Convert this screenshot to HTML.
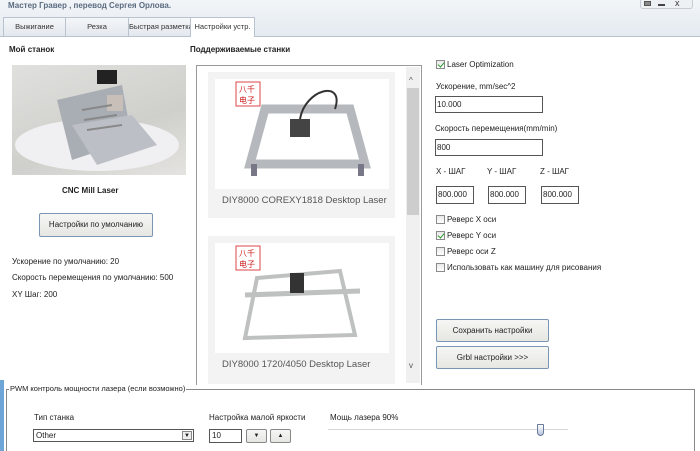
<!DOCTYPE html>
<html><head><meta charset="utf-8"><style>
*{box-sizing:border-box;margin:0;padding:0}
html,body{width:700px;height:451px;overflow:hidden}
body{background:#fff;font-family:"Liberation Sans","DejaVu Sans",sans-serif;font-size:8px;color:#222;position:relative}
.a{position:absolute;white-space:nowrap}
.b{font-weight:bold}
.tab{position:absolute;top:17px;height:19px;border:1px solid #b9c3cf;border-bottom:none;background:linear-gradient(#f4f6f8,#e3e8ee);text-align:center;line-height:17px;font-size:7.5px;color:#333;white-space:nowrap;overflow:hidden}
.inp{position:absolute;border:1px solid #555;background:#fff;font-size:8px;padding:2px 1px;line-height:11px}
.btn{position:absolute;border:1px solid #7b95b5;border-radius:2px;background:linear-gradient(#f6f6f4,#e6e6e2);text-align:center;font-size:8px}
.cb{position:absolute;width:9px;height:9px;border:1px solid #8a8a8a;background:linear-gradient(#e9e9e9,#fff)}
.ck:after{content:"";position:absolute;left:2px;top:0px;width:3px;height:5px;border:solid #2a9a2a;border-width:0 1.5px 1.5px 0;transform:rotate(40deg)}
</style></head><body>
<div class="a" style="left:0;top:0;width:700px;height:37px;background:linear-gradient(#f2f5f8,#e4eaf0)"></div>
<div class="a b" style="left:8px;top:1px;color:#5b6b80;font-size:8px">Мастер Гравер , перевод Сергея Орлова.</div>
<div class="a" style="left:640px;top:0;width:53px;height:9px;border:1px solid #c5ccd4;border-top:none;border-radius:0 0 3px 3px;background:#eef1f4"></div>
<div class="a" style="left:644px;top:1px;width:7px;height:5px;border:1px solid #555;background:#888"></div>
<div class="a" style="left:658px;top:4px;width:7px;height:2px;background:#444"></div>
<div class="a" style="left:675px;top:-2px;font-size:9px;color:#333">x</div>
<div class="a" style="left:0;top:36px;width:700px;height:1px;background:#b9c3cf"></div>
<div class="tab" style="left:3px;width:63px">Выжигание</div>
<div class="tab" style="left:65px;width:64px">Резка</div>
<div class="tab" style="left:128px;width:63px;text-align:right;padding-right:2px">Быстрая разметка</div>
<div class="tab" style="left:190px;width:65px;background:#fff;height:20px">Настройки устр.</div>

<div class="a b" style="left:9px;top:45px">Мой станок</div>
<div class="a b" style="left:190px;top:45px">Поддерживаемые станки</div>
<div class="a" style="left:12px;top:65px;width:174px;height:110px;background:linear-gradient(160deg,#e0e0de,#cfcfcb 60%,#e4e3e0)">
<svg width="174" height="110"><ellipse cx="85" cy="80" rx="82" ry="26" fill="#f0f0f2"/><polygon points="45,35 110,20 120,75 60,95" fill="#a9adb4"/><rect x="85" y="5" width="20" height="14" fill="#222"/><polygon points="60,60 120,50 145,80 85,100" fill="#bcc0c6"/><rect x="95" y="30" width="16" height="16" fill="#c8c0b8"/><path d="M70 45 L100 40 M72 55 L105 50 M75 65 L110 60" stroke="#888" stroke-width="2"/></svg></div>
<div class="a b" style="left:62px;top:186px">CNC Mill Laser</div>
<div class="btn" style="left:39px;top:213px;width:114px;height:24px;line-height:22px">Настройки по умолчанию</div>
<div class="a" style="left:12px;top:257px">Ускорение по умолчанию: 20</div>
<div class="a" style="left:12px;top:273px">Скорость перемещения по умолчанию: 500</div>
<div class="a" style="left:12px;top:290px">XY Шаг: 200</div>

<div class="a" style="left:196px;top:65px;width:226px;height:320px;border:1px solid #999;border-bottom:none"></div>
<div class="a" style="left:406px;top:67px;width:14px;height:316px;background:#f0f0f0"></div>
<div class="a" style="left:407px;top:88px;width:12px;height:127px;background:#cdcdcd"></div>
<div class="a" style="left:409px;top:76px;font-size:8px;color:#555">^</div>
<div class="a" style="left:409px;top:361px;font-size:8px;color:#555">v</div>
<div class="a" style="left:208px;top:72px;width:187px;height:146px;background:#f3f3f3"></div>
<div class="a" style="left:215px;top:79px;width:174px;height:110px;background:#fff">
<svg width="174" height="110"><rect x="21" y="3" width="24" height="24" fill="#fff" stroke="#d44" stroke-width="1"/><text x="24" y="13" font-size="8" fill="#c22" font-family="Noto Sans CJK SC">八千</text><text x="24" y="24" font-size="8" fill="#c22" font-family="Noto Sans CJK SC">电子</text><polygon points="50,30 135,30 150,85 35,85" fill="none" stroke="#b5b8bc" stroke-width="9"/><rect x="75" y="40" width="20" height="18" fill="#444"/><path d="M85 40 C 90 10, 130 0, 120 30" stroke="#333" stroke-width="2" fill="none"/><rect x="36" y="85" width="6" height="12" fill="#778"/><rect x="143" y="85" width="6" height="12" fill="#778"/></svg></div>
<div class="a" style="left:222px;top:195px;font-size:9.5px;color:#555">DIY8000 COREXY1818 Desktop Laser</div>
<div class="a" style="left:208px;top:236px;width:187px;height:148px;background:#f3f3f3"></div>
<div class="a" style="left:215px;top:243px;width:174px;height:110px;background:#fff">
<svg width="174" height="110"><rect x="21" y="3" width="24" height="24" fill="#fff" stroke="#d44"/><text x="24" y="13" font-size="8" fill="#c22" font-family="Noto Sans CJK SC">八千</text><text x="24" y="24" font-size="8" fill="#c22" font-family="Noto Sans CJK SC">电子</text><polygon points="42,35 125,28 140,92 30,95" fill="none" stroke="#bfc1c0" stroke-width="4"/><line x1="30" y1="52" x2="145" y2="48" stroke="#bfc1c0" stroke-width="5"/><rect x="75" y="30" width="14" height="20" fill="#333"/></svg></div>
<div class="a" style="left:222px;top:359px;font-size:9.5px;color:#555">DIY8000 1720/4050 Desktop Laser</div>

<div class="cb ck" style="left:436px;top:60px"></div><div class="a" style="left:447px;top:60px">Laser Optimization</div>
<div class="a" style="left:436px;top:82px">Ускорение, mm/sec^2</div>
<div class="inp" style="left:435px;top:96px;width:108px;height:17px">10.000</div>
<div class="a" style="left:435px;top:124px">Скорость перемещения(mm/min)</div>
<div class="inp" style="left:435px;top:139px;width:108px;height:17px">800</div>
<div class="a" style="left:436px;top:167px">X - ШАГ</div>
<div class="a" style="left:487px;top:167px">Y - ШАГ</div>
<div class="a" style="left:540px;top:167px">Z - ШАГ</div>
<div class="inp" style="left:436px;top:186px;width:38px;height:18px">800.000</div>
<div class="inp" style="left:488px;top:186px;width:38px;height:18px">800.000</div>
<div class="inp" style="left:541px;top:186px;width:38px;height:18px">800.000</div>
<div class="cb" style="left:436px;top:215px"></div><div class="a" style="left:447px;top:215px">Реверс X оси</div>
<div class="cb ck" style="left:436px;top:231px"></div><div class="a" style="left:447px;top:231px">Реверс Y оси</div>
<div class="cb" style="left:436px;top:247px"></div><div class="a" style="left:447px;top:247px">Реверс оси Z</div>
<div class="cb" style="left:436px;top:263px"></div><div class="a" style="left:447px;top:263px">Использовать как машину для рисования</div>
<div class="btn" style="left:436px;top:319px;width:113px;height:23px;line-height:21px">Сохранить настройки</div>
<div class="btn" style="left:436px;top:346px;width:113px;height:23px;line-height:21px">Grbl настройки &gt;&gt;&gt;</div>

<div class="a" style="left:0;top:380px;width:4px;height:71px;background:#6fa6d8"></div>
<div class="a" style="left:6px;top:389px;width:689px;height:62px;border:1px solid #888;border-bottom:none"></div>
<div class="a" style="left:9px;top:384px;background:#fff;padding:0 1px;font-size:7.5px">PWM контроль мощности лазера (если возможно)</div>
<div class="a" style="left:34px;top:413px">Тип станка</div>
<div class="inp" style="left:33px;top:429px;width:161px;height:13px;padding:1px 2px;line-height:10px">Other</div>
<div class="a" style="left:182px;top:431px;width:10px;height:9px;border:1px solid #888;background:#eee;font-size:6px;text-align:center;line-height:8px">▼</div>
<div class="a" style="left:209px;top:413px">Настройка малой яркости</div>
<div class="inp" style="left:209px;top:429px;width:33px;height:14px;padding:1px 2px;line-height:10px">10</div>
<div class="btn" style="left:246px;top:429px;width:21px;height:14px;font-size:6px;line-height:12px;border-color:#888">▼</div>
<div class="btn" style="left:270px;top:429px;width:21px;height:14px;font-size:6px;line-height:12px;border-color:#888">▲</div>
<div class="a" style="left:330px;top:413px">Мощь лазера 90%</div>
<div class="a" style="left:328px;top:429px;width:240px;height:2px;background:#d8d8d8;border-bottom:1px solid #fff"></div>
<div class="a" style="left:537px;top:424px;width:7px;height:12px;border:1px solid #6a7a9a;border-radius:1px 1px 4px 4px;background:linear-gradient(#fff,#b8c4dc)"></div>
</body></html>
